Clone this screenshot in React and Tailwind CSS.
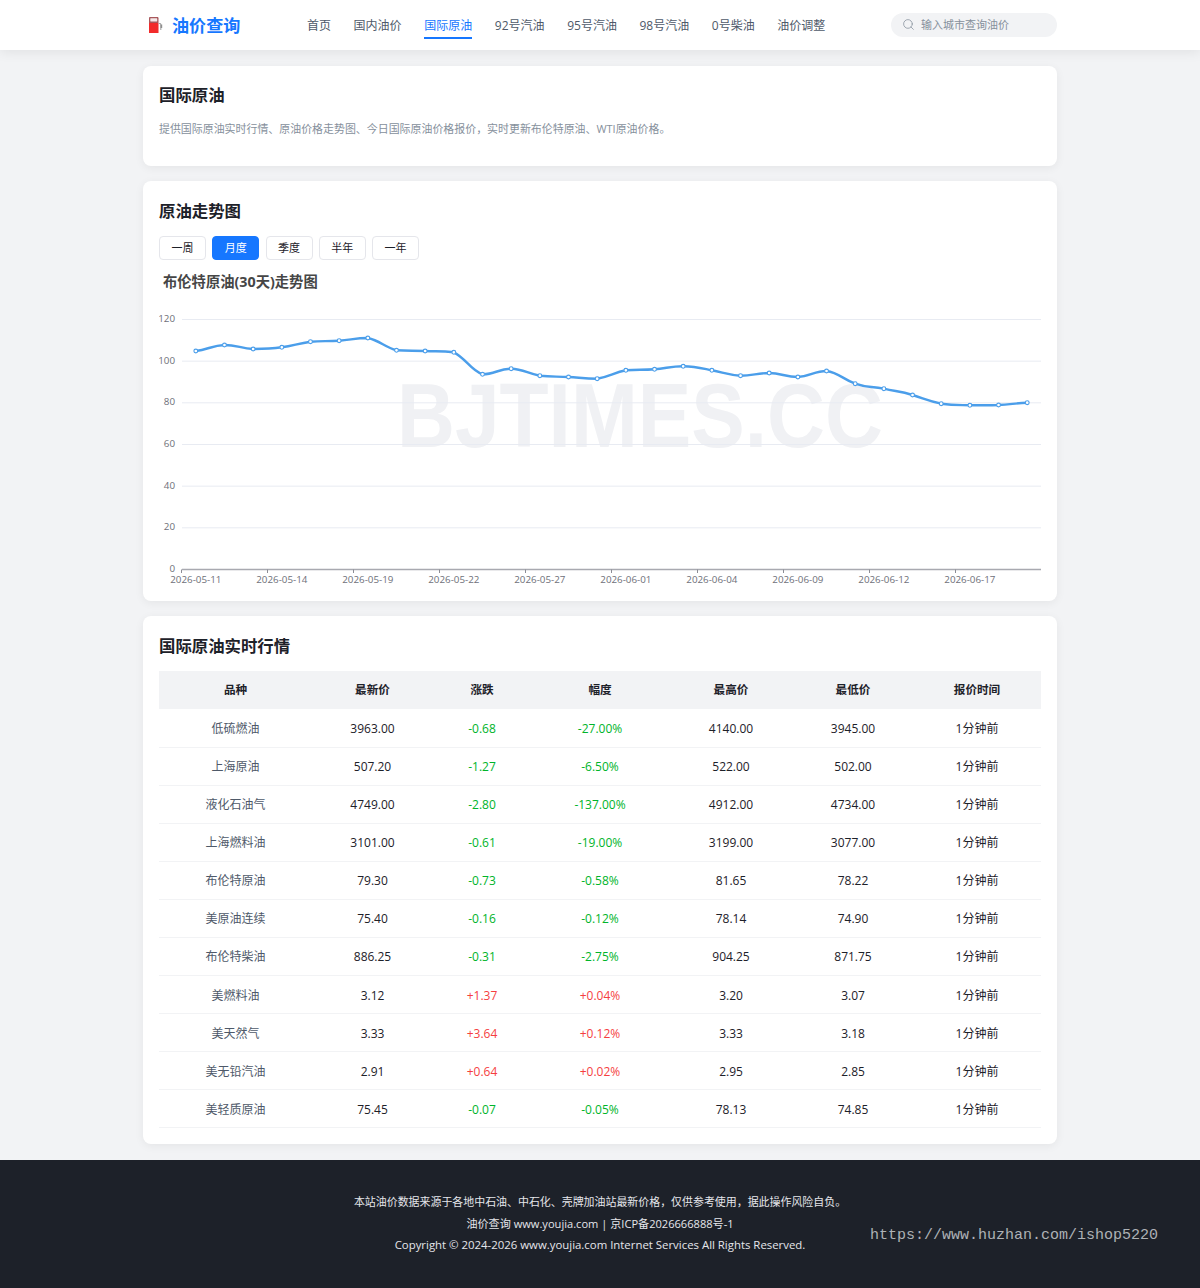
import { Search } from 'lucide-react';

const NAV = ['首页', '国内油价', '国际原油', '92号汽油', '95号汽油', '98号汽油', '0号柴油', '油价调整'];
const RANGES = ['一周', '月度', '季度', '半年', '一年'];

const ROWS = [
  ['低硫燃油', '3963.00', '-0.68', '-27.00%', '4140.00', '3945.00'],
  ['上海原油', '507.20', '-1.27', '-6.50%', '522.00', '502.00'],
  ['液化石油气', '4749.00', '-2.80', '-137.00%', '4912.00', '4734.00'],
  ['上海燃料油', '3101.00', '-0.61', '-19.00%', '3199.00', '3077.00'],
  ['布伦特原油', '79.30', '-0.73', '-0.58%', '81.65', '78.22'],
  ['美原油连续', '75.40', '-0.16', '-0.12%', '78.14', '74.90'],
  ['布伦特柴油', '886.25', '-0.31', '-2.75%', '904.25', '871.75'],
  ['美燃料油', '3.12', '+1.37', '+0.04%', '3.20', '3.07'],
  ['美天然气', '3.33', '+3.64', '+0.12%', '3.33', '3.18'],
  ['美无铅汽油', '2.91', '+0.64', '+0.02%', '2.95', '2.85'],
  ['美轻质原油', '75.45', '-0.07', '-0.05%', '78.13', '74.85'],
];

// y positions of the series, read off the chart
const SERIES = [
  351, 345, 349, 347.3, 341.7, 340.7, 338, 350.3, 351, 352.3, 374.3, 368.7, 375.7, 377, 378.7,
  370.3, 369.3, 366.3, 370.3, 375.7, 373, 377, 371, 383.7, 388.7, 395, 403.7, 405.3, 405, 402.7,
];
const DATES = [
  '2026-05-11', '2026-05-14', '2026-05-19', '2026-05-22', '2026-05-27',
  '2026-06-01', '2026-06-04', '2026-06-09', '2026-06-12', '2026-06-17',
];
const TOP = 260;
const LEFT = 159;
const points = SERIES.map((y, i) => [195.8 + i * 28.67 - LEFT, y - TOP]);

function smoothPath(pts) {
  const clamp = (v, a, b) => Math.min(Math.max(a, b), Math.max(Math.min(a, b), v));
  let d = `M${pts[0][0]} ${pts[0][1]}`;
  for (let i = 0; i < pts.length - 1; i++) {
    const p0 = pts[i - 1] || pts[i];
    const p1 = pts[i];
    const p2 = pts[i + 1];
    const p3 = pts[i + 2] || p2;
    const c1y = clamp(p1[1] + (p2[1] - p0[1]) * 0.25, p1[1], p2[1]);
    const c2y = clamp(p2[1] - (p3[1] - p1[1]) * 0.25, p1[1], p2[1]);
    d += ` C${p1[0] + 12} ${c1y} ${p2[0] - 12} ${c2y} ${p2[0]} ${p2[1]}`;
  }
  return d;
}

function PumpIcon() {
  return (
    <svg width="20" height="20" viewBox="0 0 20 20" className="shrink-0">
      <path d="M4 3.2C4 2.5 4.5 2 5.2 2h7.1c.7 0 1.2.5 1.2 1.2V8H4z" fill="#a8585c" />
      <rect x="5.3" y="3.3" width="6.9" height="3.2" rx="0.4" fill="#f5e9e9" />
      <rect x="4" y="8" width="9.5" height="10" fill="#f22b2b" />
      <path d="M13.5 8.5h1.4c.5 0 .9.4.9.9V15" fill="none" stroke="#a5a5a5" strokeWidth="1.1" />
      <rect x="15.6" y="9.5" width="1.6" height="3.5" fill="#8f8f8f" />
    </svg>
  );
}

function Header() {
  return (
    <header className="bg-white h-[50px] shadow-[0_2px_12px_rgba(0,0,0,0.08)] relative">
      <div className="w-[914px] mx-auto h-full flex items-center pt-[1px]">
        <div className="w-[164px] flex items-center gap-[7px] pl-[2px]">
          <PumpIcon />
          <span className="text-[17.1px] font-bold text-[#1677ff]">油价查询</span>
        </div>
        <nav className="flex gap-[22.6px] h-full">
          {NAV.map((item) => (
            <a
              key={item}
              className={
                item === '国际原油'
                  ? 'h-full flex items-center text-[12px] text-[#1677ff] relative after:absolute after:left-0 after:right-0 after:bottom-[11px] after:h-[2px] after:bg-[#1677ff]'
                  : 'h-full flex items-center text-[12px] text-[#4e5969]'
              }
            >
              {item}
            </a>
          ))}
        </nav>
        <div className="ml-auto -mt-[2px] w-[166px] h-[24px] rounded-full bg-[#f2f3f5] flex items-center pl-[11px]">
          <Search size={13} strokeWidth={1.4} className="text-[#86909c]" />
          <span className="ml-[6px] pt-[1px] text-[11px] text-[#86909c]">输入城市查询油价</span>
        </div>
      </div>
    </header>
  );
}

function Card({ title, tall, className, children }) {
  return (
    <section className={`bg-white rounded-[8px] px-[16px] pt-[16px] shadow-[0_2px_10px_rgba(0,0,0,0.06)] ${className}`}>
      <h2
        className={
          tall
            ? 'text-[16.4px] leading-[28px] font-bold text-[#1d2129]'
            : 'text-[16.4px] leading-[26px] font-bold text-[#1d2129]'
        }
      >
        {title}
      </h2>
      {children}
    </section>
  );
}

function Chart() {
  const gridY = [120, 100, 80, 60, 40, 20, 0];
  const axisY = (v) => 569.5 - TOP - (v / 120) * 250;
  return (
    <svg width="882" height="325" className="block">
      <text x="4" y="27" fontSize="14.3" fontWeight="700" fill="#464646">
        布伦特原油(30天)走势图
      </text>
      <text
        x="481"
        y="187"
        fontSize="90"
        fontWeight="700"
        fill="#f0f1f4"
        textAnchor="middle"
        textLength="486"
        lengthAdjust="spacingAndGlyphs"
        fontFamily="'Liberation Sans', sans-serif"
      >
        BJTIMES.CC
      </text>
      {gridY.slice(0, 6).map((v) => (
        <line key={v} x1="23" x2="882" y1={axisY(v)} y2={axisY(v)} stroke="#e8ebf2" />
      ))}
      {gridY.map((v) => (
        <text key={v} x="16" y={axisY(v) + 2.5} fontSize="9.8" fill="#6e7079" textAnchor="end">
          {v}
        </text>
      ))}
      <line x1="23" x2="882" y1={axisY(0)} y2={axisY(0)} stroke="#a8a9b0" strokeWidth="1.5" />
      {DATES.map((d, i) => (
        <g key={d}>
          <line x1={22.5 + i * 86} x2={22.5 + i * 86} y1={axisY(0)} y2={axisY(0) + 3.5} stroke="#8b8c94" />
          <text x={points[i * 3][0]} y={323} fontSize="9.8" fill="#6e7079" textAnchor="middle">
            {d}
          </text>
        </g>
      ))}
      <path d={smoothPath(points)} fill="none" stroke="#4b9eea" strokeWidth="2.4" />
      {points.map(([x, y]) => (
        <circle key={x} cx={x} cy={y} r="1.9" fill="#fff" stroke="#4b9eea" strokeWidth="1.1" />
      ))}
    </svg>
  );
}

function QuoteTable() {
  const heads = ['品种', '最新价', '涨跌', '幅度', '最高价', '最低价', '报价时间'];
  return (
    <table className="w-[882px] table-fixed border-collapse mt-[11px] text-center">
      <colgroup>
        <col className="w-[153px]" />
        <col className="w-[121px]" />
        <col className="w-[98px]" />
        <col className="w-[138px]" />
        <col className="w-[124px]" />
        <col className="w-[120px]" />
        <col className="w-[128px]" />
      </colgroup>
      <thead>
        <tr className="h-[38px] bg-[#f2f3f5]">
          {heads.map((h) => (
            <th key={h} className="text-[11.6px] font-bold text-[#1d2129]">
              {h}
            </th>
          ))}
        </tr>
      </thead>
      <tbody>
        {ROWS.map((row, i) => {
          const color = row[2].startsWith('+') ? 'text-[#f53f3f]' : 'text-[#00b42a]';
          return (
            <tr
              key={row[0]}
              className={
                i > 6
                  ? 'h-[38px] border-b border-[#f2f3f5] text-[12px] [&>td]:pt-[3px]'
                  : 'h-[38px] border-b border-[#f2f3f5] text-[12px] [&>td]:pt-[2px]'
              }
            >
              <td className="text-[#4e5969]">{row[0]}</td>
              <td className="text-[#1d2129]">{row[1]}</td>
              <td className={color}>{row[2]}</td>
              <td className={color}>{row[3]}</td>
              <td className="text-[#1d2129]">{row[4]}</td>
              <td className="text-[#1d2129]">{row[5]}</td>
              <td className="text-[#1d2129]">1分钟前</td>
            </tr>
          );
        })}
      </tbody>
    </table>
  );
}

export default function App() {
  return (
    <div className="min-h-[1288px] bg-[#f2f3f5] font-['Open_Sans','Noto_Sans_CJK_SC',sans-serif] relative">
      <Header />
      <main className="w-[914px] mx-auto pt-[16px] flex flex-col gap-[15px]">
        <Card title="国际原油" className="h-[100px]">
          <p className="mt-[12px] text-[10.95px] leading-[18px] text-[#86909c]">
            提供国际原油实时行情、原油价格走势图、今日国际原油价格报价，实时更新布伦特原油、WTI原油价格。
          </p>
        </Card>
        <Card title="原油走势图" tall className="h-[420px]">
          <div className="flex gap-[6.25px] mt-[11px]">
            {RANGES.map((r) => (
              <button
                key={r}
                className={
                  r === '月度'
                    ? 'w-[47px] h-[24px] pt-[1px] rounded-[4px] border border-[#1677ff] bg-[#1677ff] text-white text-[11px]'
                    : 'w-[47px] h-[24px] pt-[1px] rounded-[4px] border border-[#e5e6eb] bg-white text-[#1d2129] text-[11px]'
                }
              >
                {r}
              </button>
            ))}
          </div>
          <Chart />
        </Card>
        <Card title="国际原油实时行情" tall className="h-[528px]">
          <QuoteTable />
        </Card>
      </main>
      <footer className="mt-[16px] h-[128px] bg-[#1d2129] pt-[31px] text-center text-[#e5e6eb] leading-[21.5px]">
        <p className="text-[10.95px]">本站油价数据来源于各地中石油、中石化、壳牌加油站最新价格，仅供参考使用，据此操作风险自负。</p>
        <p className="text-[11.1px]">油价查询 www.youjia.com | 京ICP备2026666888号-1</p>
        <p className="text-[11.4px]">Copyright © 2024-2026 www.youjia.com Internet Services All Rights Reserved.</p>
      </footer>
      <div className="absolute left-[870px] top-[1226px] text-[15px] leading-[20px] text-[#aeb2b6] font-['Liberation_Mono',monospace]">
        https://www.huzhan.com/ishop5220
      </div>
    </div>
  );
}
